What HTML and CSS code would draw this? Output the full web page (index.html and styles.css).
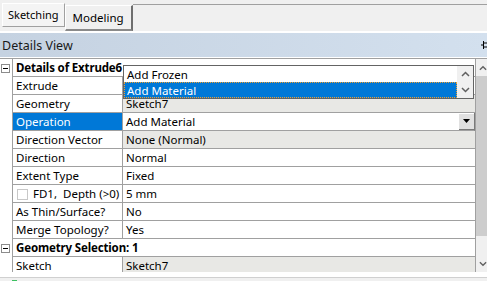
FILE: index.html
```html
<!DOCTYPE html>
<html lang="en">
<head>
    <meta charset="UTF-8">
    <title>Details View</title>
    <link rel="stylesheet" href="styles.css">
</head>
<body>
    <div class="tabbar">
        <div class="tab">Sketching</div>
        <div class="tab tab-active">Modeling</div>
        <div class="tab-fill"></div>
    </div>
    <div class="panel-title">
        <span>Details View</span>
        <svg class="pin" width="8" height="10" viewBox="0 0 8 10"><path d="M0 5h2.5M2.5 1v8M2.5 3h4v4h-4" fill="none" stroke="#000" stroke-width="1"/></svg>
    </div>
    <div class="details">
        <div class="grid">
            <div class="row group">
                <div class="exp"><span class="toggle"></span></div>
                <div class="group-label">Details of Extrude6</div>
            </div>
            <div class="row">
                <div class="exp"></div>
                <div class="name">Extrude</div>
                <div class="value"></div>
            </div>
            <div class="row">
                <div class="exp"></div>
                <div class="name">Geometry</div>
                <div class="value readonly">Sketch7</div>
            </div>
            <div class="row">
                <div class="exp"></div>
                <div class="name selected">Operation</div>
                <div class="value combo">
                    <span>Add Material</span>
                    <span class="combo-btn"><svg width="7" height="4" viewBox="0 0 7 4"><path d="M0 0h7L3.5 4z" fill="#000"/></svg></span>
                </div>
            </div>
            <div class="row">
                <div class="exp"></div>
                <div class="name">Direction Vector</div>
                <div class="value readonly">None (Normal)</div>
            </div>
            <div class="row">
                <div class="exp"></div>
                <div class="name">Direction</div>
                <div class="value">Normal</div>
            </div>
            <div class="row">
                <div class="exp"></div>
                <div class="name">Extent Type</div>
                <div class="value">Fixed</div>
            </div>
            <div class="row">
                <div class="exp"></div>
                <div class="name"><span class="check"></span>FD1,&nbsp; Depth (&gt;0)</div>
                <div class="value">5 mm</div>
            </div>
            <div class="row">
                <div class="exp"></div>
                <div class="name">As Thin/Surface?</div>
                <div class="value">No</div>
            </div>
            <div class="row">
                <div class="exp"></div>
                <div class="name">Merge Topology?</div>
                <div class="value">Yes</div>
            </div>
            <div class="row group">
                <div class="exp"><span class="toggle"></span></div>
                <div class="group-label">Geometry Selection: 1</div>
            </div>
            <div class="row">
                <div class="exp"></div>
                <div class="name">Sketch</div>
                <div class="value readonly">Sketch7</div>
            </div>
        </div>
        <div class="vscroll">
            <div class="sb-arrow"><svg width="9" height="6" viewBox="0 0 9 6"><path d="M1 5l3.5-3.5L8 5" fill="none" stroke="#606060" stroke-width="1.5"/></svg></div>
            <div class="sb-thumb"></div>
            <div class="sb-track"></div>
            <div class="sb-arrow"><svg width="9" height="6" viewBox="0 0 9 6"><path d="M1 1l3.5 3.5L8 1" fill="none" stroke="#606060" stroke-width="1.5"/></svg></div>
        </div>

        <!-- drop-down list of the Operation combo -->
        <div class="popup">
            <div class="popup-items">
                <div class="item">Add Frozen</div>
                <div class="item item-active">Add Material</div>
            </div>
            <div class="popup-scroll">
                <svg width="9" height="6" viewBox="0 0 9 6"><path d="M1 5l3.5-3.5L8 5" fill="none" stroke="#606060" stroke-width="1.5"/></svg>
                <svg width="9" height="6" viewBox="0 0 9 6"><path d="M1 1l3.5 3.5L8 1" fill="none" stroke="#606060" stroke-width="1.5"/></svg>
            </div>
        </div>
    </div>
    <div class="statusbar"><span class="status-led"></span></div>
</body>
</html>
```

FILE: styles.css
```css
:root {
    --font-ui: 'Noto Sans', 'Noto Sans CJK SC', sans-serif;
    --color-line: #a0a0a0;
    --color-face: #f0f0f0;
    --color-select: #0078d7;
    --color-readonly: #e8e8e5;
}
body {
    margin: 0;
    width: 487px;
    height: 281px;
    overflow: hidden;
    background: #ffffff;
    font-family: var(--font-ui);
    font-size: 11.5px;
    color: #000;
}

/* tabs */
.tabbar {
    display: flex;
    align-items: flex-start;
    height: 31px;
    padding-left: 2px;
    background: var(--color-face);
    box-sizing: border-box;
    font-size: 11px;
}
.tab {
    margin-top: 3px;
    height: 24px;
    padding: 0 5px;
    line-height: 22px;
    border: 1px solid #fff;
    border-right-color: #a0a0a0;
    border-bottom-color: #a0a0a0;
    box-sizing: border-box;
    background: #f4f4f4;
}
.tab-active {
    margin-top: 5px;
    height: 26px;
    padding: 0 7px;
    line-height: 24px;
    border-right: 2px solid #6e6e6e;
    border-bottom: 2px solid #8a8a8a;
    background: #f0f0f0;
    font-size: 11.5px;
}
.tab-fill {
    flex: 1;
    margin-top: 4px;
    border-top: 1px solid var(--color-line);
}

/* title band */
.panel-title {
    display: flex;
    justify-content: space-between;
    align-items: center;
    margin-top: 2px;
    height: 24px;
    padding-left: 2px;
    background: linear-gradient(to right, #c5d2e1, #d3e0ee);
    font-size: 12.5px;
    color: #1a1a1a;
}
.pin {
    margin-right: -2px;
}

/* property grid */
.details {
    position: relative;
    display: flex;
    height: 213px;
    margin-top: 1px;
    border-top: 1px solid var(--color-line);
    overflow: hidden;
}
.grid {
    flex: 1;
    border-right: 1px solid var(--color-line);
}
.row {
    display: grid;
    grid-template-columns: 13px 110px 1fr;
    height: 18px;
}
.row > div {
    box-sizing: border-box;
    height: 18px;
    line-height: 17px;
}
.exp {
    display: flex;
    align-items: center;
    justify-content: center;
    border-right: 1px solid var(--color-line);
    background: #fff;
}
.toggle {
    position: relative;
    width: 9px;
    height: 9px;
    border: 1px solid #8c8c8c;
    box-sizing: border-box;
    margin-left: -1px;
}
.toggle::after {
    content: "";
    position: absolute;
    left: 1px;
    top: 3px;
    width: 5px;
    height: 1px;
    background: #000;
}
.name {
    padding-left: 3px;
    border-right: 1px solid var(--color-line);
    border-bottom: 1px solid var(--color-line);
    white-space: nowrap;
    overflow: hidden;
}
.name.selected {
    background: var(--color-select);
    color: #fff;
}
.value {
    padding-left: 3px;
    border-bottom: 1px solid var(--color-line);
    white-space: nowrap;
}
.value.readonly {
    background: var(--color-readonly);
}
.group-label {
    grid-column: 2 / 4;
    padding-left: 3px;
    font-weight: bold;
    letter-spacing: -0.15px;
    border-bottom: 1px solid var(--color-line);
}
.check {
    display: inline-block;
    width: 11px;
    height: 11px;
    margin: 0 5px 0 1px;
    vertical-align: -2px;
    border: 1px solid #c8c8c8;
    box-sizing: border-box;
    background: #fff;
}
.combo {
    display: flex;
    justify-content: space-between;
    align-items: center;
    border-right: 1px solid #7a7a7a;
}
.combo-btn {
    display: flex;
    align-items: center;
    justify-content: center;
    width: 15px;
    height: 16px;
    background: #e1e1e1;
    border-bottom: 1px solid #7a7a7a;
    box-sizing: border-box;
}

/* grid scrollbar */
.vscroll {
    display: flex;
    flex-direction: column;
    width: 11px;
    background: var(--color-face);
}
.sb-arrow {
    height: 17px;
    display: flex;
    align-items: center;
    padding-left: 3px;
}
.sb-thumb {
    height: 160px;
    background: #cdcdcd;
}
.sb-track {
    flex: 1;
}

/* drop-down list */
.popup {
    position: absolute;
    left: 123px;
    top: 6px;
    width: 351px;
    height: 34px;
    display: flex;
    border: 1px solid #646464;
    box-sizing: border-box;
    background: #fff;
}
.popup-items {
    flex: 1;
}
.item {
    height: 16px;
    line-height: 17px;
    padding-left: 3px;
}
.item-active {
    background: var(--color-select);
    color: #fff;
    outline: 1px dotted #f0a030;
    outline-offset: -1px;
}
.popup-scroll {
    width: 16px;
    display: flex;
    flex-direction: column;
    justify-content: space-between;
    align-items: center;
    padding: 5px 0 5px;
    background: var(--color-face);
}

.statusbar {
    height: 5px;
    margin-top: 5px;
    border-top: 1px solid #d0d0d0;
    background: var(--color-face);
}
.status-led {
    display: block;
    width: 5px;
    height: 3px;
    margin: 2px 0 0 12px;
    background: #3cc060;
}
```
